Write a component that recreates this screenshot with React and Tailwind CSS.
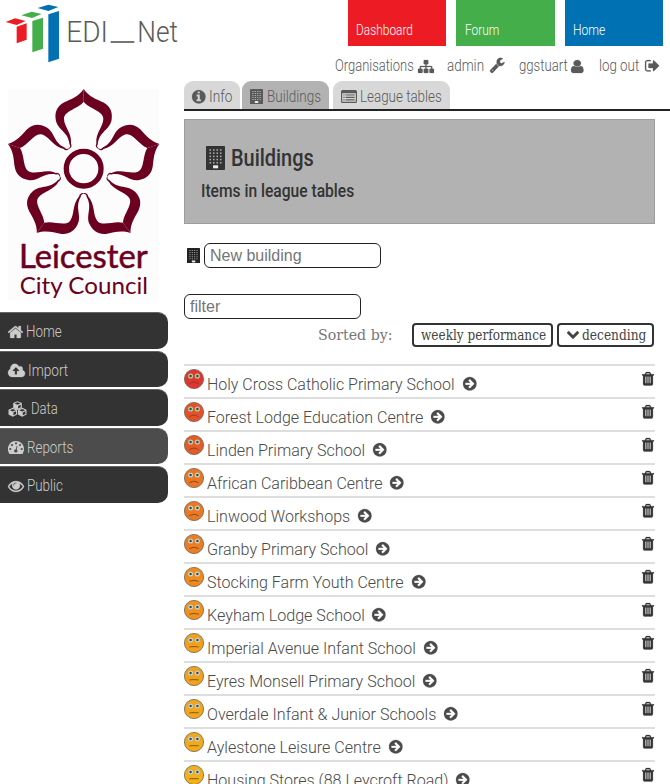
import { useLayoutEffect, useRef } from "react";

/* One line of text condensed or expanded to a fixed width. */
function Fit({ w, className = "", children }) {
  const ref = useRef(null);
  useLayoutEffect(() => {
    const el = ref.current;
    el.style.transform = `scaleX(${w / el.offsetWidth})`;
  }, [w]);
  return (
    <span className={`inline-block shrink-0 whitespace-nowrap ${className}`} style={{ width: w }}>
      <span ref={ref} className="inline-block origin-left">{children}</span>
    </span>
  );
}

const PATHS = {
  home: "M1472 992v480q0 26-19 45t-45 19h-384v-384h-256v384h-384q-26 0-45-19t-19-45v-480q0-1 .5-3t.5-3l575-474 575 474q1 2 1 6zm223-69l-62 74q-8 9-21 11h-3q-13 0-21-7l-692-577-692 577q-12 8-24 7-13-2-21-11l-62-74q-8-10-7-23.5t11-21.5l719-599q32-26 76-26t76 26l244 204v-195q0-14 9-23t23-9h192q14 0 23 9t9 23v408l219 182q10 8 11 21.5t-7 23.5z",
  cloud: "M1216 864q0-14-9-23l-352-352q-9-9-23-9t-23 9l-351 351q-10 12-10 24 0 14 9 23t23 9h224v352q0 13 9.5 22.5t22.5 9.5h192q13 0 22.5-9.5t9.5-22.5v-352h224q13 0 22.5-9.5t9.5-22.5zm640 288q0 159-112.5 271.5t-271.5 112.5h-1088q-185 0-316.5-131.5t-131.5-316.5q0-130 70-240t188-165q-2-30-2-43 0-212 150-362t362-150q156 0 285.5 87t188.5 231q71-62 166-62 106 0 181 75t75 181q0 76-41 138 130 31 213.5 135.5t83.5 238.5z",
  eye: "M1664 960q-152-236-381-353 61 104 61 225 0 185-131.5 316.5t-316.5 131.5-316.5-131.5-131.5-316.5q0-121 61-225-229 117-381 353 133 205 333.5 326.5t434.5 121.5 434.5-121.5 333.5-326.5zm-720-384q0-20-14-34t-34-14q-125 0-214.5 89.5t-89.5 214.5q0 20 14 34t34 14 34-14 14-34q0-86 61-147t147-61q20 0 34-14t14-34zm848 384q0 34-20 69-140 230-376.5 368.5t-499.5 138.5-499.5-139-376.5-368q-20-35-20-69t20-69q140-229 376.5-368t499.5-139 499.5 139 376.5 368q20 35 20 69z",
  arrow: "M1413 896q0-27-18-45l-91-91-362-362q-18-18-45-18t-45 18l-91 91q-18 18-18 45t18 45l189 189h-502q-26 0-45 19t-19 45v128q0 26 19 45t45 19h502l-189 189q-18 18-18 45t18 45l91 91q18 18 45 18t45-18l362-362 91-91q18-18 18-45zm251 0q0 209-103 385.5t-279.5 279.5-385.5 103-385.5-103-279.5-279.5-103-385.5 103-385.5 279.5-279.5 385.5-103 385.5 103 279.5 279.5 103 385.5z",
  info: "M1152 1376v-160q0-14-9-23t-23-9h-96v-512q0-14-9-23t-23-9h-320q-14 0-23 9t-9 23v160q0 14 9 23t23 9h96v320h-96q-14 0-23 9t-9 23v160q0 14 9 23t23 9h448q14 0 23-9t9-23zm-128-896v-160q0-14-9-23t-23-9h-192q-14 0-23 9t-9 23v160q0 14 9 23t23 9h192q14 0 23-9t9-23zm640 416q0 209-103 385.5t-279.5 279.5-385.5 103-385.5-103-279.5-279.5-103-385.5 103-385.5 279.5-279.5 385.5-103 385.5 103 279.5 279.5 103 385.5z",
  sitemap: "M1792 1248v320q0 40-28 68t-68 28h-320q-40 0-68-28t-28-68v-320q0-40 28-68t68-28h96v-192h-512v192h96q40 0 68 28t28 68v320q0 40-28 68t-68 28h-320q-40 0-68-28t-28-68v-320q0-40 28-68t68-28h96v-192h-512v192h96q40 0 68 28t28 68v320q0 40-28 68t-68 28h-320q-40 0-68-28t-28-68v-320q0-40 28-68t68-28h96v-192q0-52 38-90t90-38h512v-192h-96q-40 0-68-28t-28-68v-320q0-40 28-68t68-28h320q40 0 68 28t28 68v320q0 40-28 68t-68 28h-96v192h512q52 0 90 38t38 90v192h96q40 0 68 28t28 68z",
  wrench: "M448 1472q0-26-19-45t-45-19-45 19-19 45 19 45 45 19 45-19 19-45zm644-420l-682 682q-37 37-90 37-52 0-91-37l-106-108q-38-36-38-90 0-53 38-91l681-681q39 98 114.5 173.5t173.5 114.5zm634-435q0 39-23 106-47 134-164.5 217.5t-258.5 83.5q-185 0-316.5-131.5t-131.5-316.5 131.5-316.5 316.5-131.5q58 0 121.5 16.5t107.5 46.5q16 11 16 28t-16 28l-293 169v224l193 107q5-3 79-48.5t135.5-81 70.5-35.5q15 0 23.5 10t8.5 25z",
  user: "M1536 1399q0 109-62.5 187t-150.5 78h-854q-88 0-150.5-78t-62.5-187q0-85 8.5-160.5t31.5-152 58.5-131 94-89 134.5-34.5q131 128 313 128t313-128q76 0 134.5 34.5t94 89 58.5 131 31.5 152 8.5 160.5zm-256-887q0 159-112.5 271.5t-271.5 112.5-271.5-112.5-112.5-271.5 112.5-271.5 271.5-112.5 271.5 112.5 112.5 271.5z",
  signout: "M704 1440q0 4 1 20t.5 26.5-3 23.5-10 19.5-20.5 6.5h-320q-119 0-203.5-84.5t-84.5-203.5v-704q0-119 84.5-203.5t203.5-84.5h320q13 0 22.5 9.5t9.5 22.5q0 4 1 20t.5 26.5-3 23.5-10 19.5-20.5 6.5h-320q-66 0-113 47t-47 113v704q0 66 47 113t113 47h312l11.5 1 11.5 3 8 5.5 7 9 2 13.5zm928-544q0 26-19 45l-544 544q-19 19-45 19t-45-19-19-45v-288h-448q-26 0-45-19t-19-45v-384q0-26 19-45t45-19h448v-288q0-26 19-45t45-19 45 19l544 544q19 19 19 45z",
  chevron: "M1683 808l-742 741q-19 19-45 19t-45-19l-742-741q-19-19-19-45.5t19-45.5l166-165q19-19 45-19t45 19l531 531 531-531q19-19 45-19t45 19l166 165q19 19 19 45.5t-19 45.5z",
  trash: "M704 1376v-704q0-14-9-23t-23-9h-64q-14 0-23 9t-9 23v704q0 14 9 23t23 9h64q14 0 23-9t9-23zm256 0v-704q0-14-9-23t-23-9h-64q-14 0-23 9t-9 23v704q0 14 9 23t23 9h64q14 0 23-9t9-23zm256 0v-704q0-14-9-23t-23-9h-64q-14 0-23 9t-9 23v704q0 14 9 23t23 9h64q14 0 23-9t9-23zm-544-992h448l-48-117q-7-9-17-11h-317q-10 2-17 11zm928 32v64q0 14-9 23t-23 9h-96v948q0 83-47 143.5t-113 60.5h-832q-66 0-113-58.5t-47-141.5v-952h-96q-14 0-23-9t-9-23v-64q0-14 9-23t23-9h309l70-167q15-37 54-63t79-26h320q40 0 79 26t54 63l70 167h309q14 0 23 9t9 23z",
};

const BOXES = {
  home: "89 253 1613 1283",
  cloud: "-64 256 1920 1280",
  eye: "0 384 1792 1152",
  arrow: "128 128 1536 1536",
  info: "128 128 1536 1536",
  sitemap: "0 128 1792 1536",
  wrench: "85 256 1641 1515",
  user: "256 128 1280 1536",
  signout: "64 256 1568 1280",
  chevron: "90 533 1612 1035",
  trash: "192 128 1408 1536",
};

function Icon({ name, className }) {
  return (
    <svg viewBox={BOXES[name]} fill="currentColor" stroke="currentColor" strokeWidth="25" preserveAspectRatio="none" className={`block shrink-0 overflow-visible ${className}`}>
      <path d={PATHS[name]} />
    </svg>
  );
}

function Building({ className }) {
  const dots = [];
  for (let r = 0; r < 5; r++) for (let c = 0; c < 4; c++) dots.push([3.3 + c * 3.3, 3.2 + r * 3.2]);
  return (
    <svg viewBox="0 0 18 24" preserveAspectRatio="none" className={`block shrink-0 ${className}`}>
      <rect width="18" height="24" rx="0.8" fill="currentColor" />
      <g className="fill-white/60">
        {dots.map(([x, y]) => (
          <rect key={`${x}-${y}`} x={x} y={y} width="1.5" height="1.5" />
        ))}
      </g>
      <rect x="6.7" y="19.3" width="4.8" height="3" className="fill-white/90" />
    </svg>
  );
}

function ListAlt({ className }) {
  return (
    <svg viewBox="0 0 16 13" className={`block shrink-0 ${className}`}>
      <path fill="currentColor" fillRule="evenodd" d="M1.5 0h13A1.5 1.5 0 0 1 16 1.5v10a1.5 1.5 0 0 1-1.5 1.5h-13A1.5 1.5 0 0 1 0 11.5v-10A1.5 1.5 0 0 1 1.5 0zM1.2 3.2v8.2q0 .4.4.4h12.8q.4 0 .4-.4V3.2z" />
      <path stroke="currentColor" strokeWidth="1.2" d="M2.4 5h1.2M4.6 5h9M2.4 7.4h1.2M4.6 7.4h9M2.4 9.8h1.2M4.6 9.8h9" />
    </svg>
  );
}

function Cubes({ className }) {
  const cube = (x, y) => (
    <g key={`${x}${y}`} transform={`translate(${x} ${y})`}>
      <path fill="currentColor" d="M0-4.4 4.3-2.5V2.3L0 4.5-4.3 2.3v-4.8z" />
      <path fill="#333" d="M0-3.3 2.9-2 0-.8-2.9-2zM.6 .3 3.2-.9V1.7L.6 3z" />
    </g>
  );
  return (
    <svg viewBox="0 0 19 16" className={`block shrink-0 ${className}`}>
      {cube(9.5, 4.6)}
      {cube(4.8, 11.2)}
      {cube(14.2, 11.2)}
    </svg>
  );
}

function Gauge({ className }) {
  return (
    <svg viewBox="0 0 16 13" className={`block shrink-0 ${className}`}>
      <path fill="currentColor" d="M8 0a8 8 0 0 1 8 8q0 2.4-1.2 4.4-.3.5-.8.5H2q-.5 0-.8-.5A8 8 0 0 1 8 0z" />
      <g fill="#4c4c4c">
        <circle cx="2.3" cy="8" r="1.1" />
        <circle cx="4" cy="4" r="1.1" />
        <circle cx="8" cy="2.3" r="1.1" />
        <circle cx="12" cy="4" r="1.1" />
        <circle cx="13.7" cy="8" r="1.1" />
        <circle cx="7.8" cy="9.9" r="1.7" />
      </g>
      <path d="M8 9.6 9 5.4" stroke="#4c4c4c" strokeWidth="0.9" strokeLinecap="round" />
    </svg>
  );
}

function Face({ color, frown, eye }) {
  return (
    <svg viewBox="0 0 20 20" className="block size-5 shrink-0">
      <circle cx="10" cy="10" r="9.6" fill={color} stroke="#6b6357" strokeWidth="0.8" />
      {[6.6, 13.4].map((x) => (
        <g key={x}>
          <circle cx={x} cy="7" r="2.6" fill={eye} stroke="#9a8a5c" strokeWidth="0.3" />
          <circle cx={x} cy="7" r="1.2" fill="#1d4b5e" />
        </g>
      ))}
      <path d={`M5.3 ${13.7 + frown / 3}Q10 ${13.7 - frown * 0.7} 14.7 ${13.7 + frown / 3}`} fill="none" stroke="#5d4a20" strokeWidth="0.8" />
    </svg>
  );
}

function EdiLogo() {
  return (
    <svg viewBox="0 0 600 240" className="block h-20 w-[200px] shrink-0">
      <path fill="#ed1c24" d="M17 66 45 55l32 8-27 12zM50 80l30-10v49l-30 11z" />
      <path fill="#43ae4a" d="M64 46l31-11 30 7-29 12zM97 63l32-10v93l-32 11z" />
      <path fill="#0071b2" d="M113 24l32-10 30 7-30 12zM145 43l32-10v143l-32 11z" />
      <g fill="#5a5a5a" fontFamily="Roboto, sans-serif" fontWeight="300" fontSize="91">
        <text x="199" y="127" textLength="125" lengthAdjust="spacingAndGlyphs">EDI</text>
        <text x="412" y="127" textLength="122" lengthAdjust="spacingAndGlyphs">Net</text>
      </g>
      <path d="M332 126h71" stroke="#5a5a5a" strokeWidth="5" />
    </svg>
  );
}

function CouncilLogo() {
  const half = "M0-239C-16-215-40-208-58-199C-80-187-87-170-84-148C-80-116-46-112-42.5-73A8 8 0 0 1-44.3-61.5L-43-60A10 10 0 0 0-38-75C-35-108-59-126-59-150C-59-174-16-180 0-201z";
  return (
    <svg viewBox="0 0 510 690" className="block h-[230px] w-[170px] shrink-0">
      <rect x="24" y="27" width="453" height="634" fill="#fcfcfc" />
      <g transform="translate(251 266)" fill="#6b0020">
        {[0, 72, 144, 216, 288].map((a) => (
          <g key={a} transform={`rotate(${a})`}>
            <path d={half} />
            <path d={half} transform="scale(-1 1)" />
          </g>
        ))}
        <circle r="52" fill="none" stroke="#6b0020" strokeWidth="16" />
      </g>
      <g fill="#6b0020" stroke="#6b0020" fontFamily="Lato, sans-serif">
        <text x="57" y="564" fontSize="96" fontWeight="400" strokeWidth="1.5" textLength="386" lengthAdjust="spacingAndGlyphs">Leicester</text>
        <text x="59" y="643" fontSize="69" fontWeight="400" strokeWidth="0" textLength="385" lengthAdjust="spacingAndGlyphs">City Council</text>
      </g>
    </svg>
  );
}

const TILES = [
  ["Dashboard", 57, "bg-[#ed1c24]"],
  ["Forum", 34, "bg-[#43ae4a]"],
  ["Home", 32, "bg-[#0071b2]"],
];

const SIDE = [
  ["Home", 36, <Icon name="home" className="h-3 w-[15px]" />, "gap-[3px] bg-[#333]"],
  ["Import", 40, <Icon name="cloud" className="h-3 w-[17px]" />, "gap-[3px] bg-[#333]"],
  ["Data", 27, <Cubes className="h-4 w-[19px]" />, "gap-1 bg-[#333]"],
  ["Reports", 46, <Gauge className="h-[13px] w-4" />, "gap-[3px] bg-[#4c4c4c]"],
  ["Public", 36, <Icon name="eye" className="h-[11px] w-4" />, "gap-[3px] bg-[#333]"],
];

const ROWS = [
  ["Holy Cross Catholic Primary School", 247, "#e3342f", 4.2, "#c5cf94"],
  ["Forest Lodge Education Centre", 215, "#e5502a", 3.9, "#c9d0a0"],
  ["Linden Primary School", 157, "#e65a29", 3.6, "#d3d2a8"],
  ["African Caribbean Centre", 174.5, "#ec7424", 2.8, "#dedcba"],
  ["Linwood Workshops", 142.5, "#ec7824", 2.6, "#dedcba"],
  ["Granby Primary School", 160, "#ed7c22", 2.4, "#dedcc0"],
  ["Stocking Farm Youth Centre", 196, "#ef8a1f", 1.8, "#e0dec8"],
  ["Keyham Lodge School", 156.5, "#f0901d", 1.5, "#dcdcd0"],
  ["Imperial Avenue Infant School", 208, "#f2a01a", 0.8, "#dcdcd0"],
  ["Eyres Monsell Primary School", 207.5, "#f2a21a", 0.6, "#dcdcd0"],
  ["Overdale Infant & Junior Schools", 228, "#f3a619", 0.4, "#dcdcd4"],
  ["Aylestone Leisure Centre", 173, "#f3aa18", 0.3, "#d8dcd8"],
  ["Housing Stores (88 Leycroft Road)", 240.5, "#f4b016", 0.2, "#d8dcd8"],
];

export default function App() {
  return (
    <div className="flex h-[784px] w-[670px] overflow-hidden bg-white font-[Roboto,sans-serif] font-light text-[#5a5a5a]">
      <aside className="flex w-[184px] shrink-0 flex-col">
        <EdiLogo />
        <CouncilLogo />
        <nav className="mt-[2px] flex w-[168px] flex-col gap-[2px]">
          {SIDE.map(([label, w, icon, cls]) => (
            <a key={label} className={`flex h-[36.5px] items-center rounded-r-[10px] border-t border-[#666] pt-[2.5px] pl-2 text-base leading-6 text-[#ccc] ${cls}`}>
              {icon}
              <Fit w={w}>{label}</Fit>
            </a>
          ))}
        </nav>
      </aside>

      <main className="flex w-[486px] shrink-0 flex-col">
        <header className="flex h-[81px] shrink-0 flex-col items-end">
          <div className="flex gap-[10px] pr-[7px]">
            {TILES.map(([label, w, bg]) => (
              <a key={label} className={`flex h-[46px] w-[98.5px] items-end pb-[5px] pl-[8.5px] text-sm leading-[22px] text-white ${bg}`}>
                <Fit w={w}>{label}</Fit>
              </a>
            ))}
          </div>
          <div className="flex h-10 w-[335px] shrink-0 items-center text-[16px] leading-5">
            <Fit w={78.5}>Organisations</Fit>
            <Icon name="sitemap" className="ml-1 h-[13px] w-4" />
            <Fit w={37} className="ml-[13.5px]">admin</Fit>
            <Icon name="wrench" className="ml-1.5 h-[14px] w-[14.5px]" />
            <Fit w={48.5} className="ml-[14px]">ggstuart</Fit>
            <Icon name="user" className="ml-[4px] h-[13px] w-[12.5px]" />
            <Fit w={40} className="ml-[15.5px]">log out</Fit>
            <Icon name="signout" className="ml-[5.5px] h-[11.5px] w-[14px]" />
          </div>
        </header>

        <div className="flex h-[30px] shrink-0 border-b-2 border-[#222] text-base leading-6">
          <a className="flex w-[55.5px] items-center rounded-t-[9px] bg-[#d8d8d8] pt-[3px] pl-2">
            <Icon name="info" className="size-[13.5px]" />
            <Fit w={23} className="ml-[3px]">Info</Fit>
          </a>
          <a className="ml-[2.5px] flex w-[87px] items-center rounded-t-[9px] bg-[#b2b2b2] pt-[3px] pl-2">
            <Building className="h-[15px] w-[13px]" />
            <Fit w={54} className="ml-1">Buildings</Fit>
          </a>
          <a className="ml-1 flex w-[117px] items-center rounded-t-[9px] bg-[#d8d8d8] pt-[3px] pl-2">
            <ListAlt className="h-[13px] w-4" />
            <Fit w={82} className="ml-[3px]">League tables</Fit>
          </a>
        </div>

        <section className="mt-2 h-[104.5px] w-[471px] shrink-0 border border-[#9d9d9d] bg-[#b2b2b2] pt-[22px] pl-4 text-[#333]">
          <h1 className="flex h-8 items-center pl-[5px] text-[24px] leading-8 font-medium">
            <Building className="h-6 w-[19px]" />
            <Fit w={83} className="ml-1.5">Buildings</Fit>
          </h1>
          <h2 className="mt-[3px] flex h-7 items-center text-[19px] leading-7 font-medium">
            <Fit w={153.5}>Items in league tables</Fit>
          </h2>
        </section>

        <div className="mt-[19.5px] flex h-[25px] shrink-0 items-center pl-[3px] font-['Liberation_Sans',sans-serif] font-normal">
          <Building className="h-[15.5px] w-[13px] text-[#222]" />
          <div className="ml-1 flex h-[25px] w-[176.5px] items-center rounded-md border-[1.5px] border-[#222] pl-[5px] text-base leading-5 text-[#757575]">
            <Fit w={92}>New building</Fit>
          </div>
        </div>
        <div className="mt-[26px] flex h-[25px] w-[176.5px] shrink-0 items-center rounded-md border-[1.5px] border-[#222] pl-[5px] font-['Liberation_Sans',sans-serif] text-base leading-5 font-normal text-[#757575]">
          <Fit w={30}>filter</Fit>
        </div>

        <div className="mt-1 flex h-6 w-[470px] shrink-0 items-center justify-end font-['DejaVu_Serif',serif] font-normal">
          <Fit w={75} className="mr-[19px] text-[15.5px] leading-6 text-[#777]">Sorted by:</Fit>
          <button className="flex h-6 w-[141px] items-center rounded border-2 border-[#333] pl-[7px] text-[14.5px] leading-5 text-[#444]">
            <Fit w={125}>weekly performance</Fit>
          </button>
          <button className="ml-1 flex h-6 w-[97px] items-center rounded border-2 border-[#333] pl-2 text-[14.5px] leading-5 text-[#444]">
            <Icon name="chevron" className="h-2 w-3" />
            <Fit w={64} className="ml-[2.5px]">decending</Fit>
          </button>
        </div>

        <ul className="mt-[17px] w-[471px] shrink-0">
          {ROWS.map(([name, w, color, frown, eye]) => (
            <li key={name} className="flex h-[33px] items-start border-t-2 border-[#dedede] text-[#4a4a4a]">
              <div className="pt-[3px]">
                <Face color={color} frown={frown} eye={eye} />
              </div>
              <Fit w={w + 1} className="ml-[3px] pt-1.5 text-[17px] leading-6">{name}</Fit>
              <Icon name="arrow" className="mt-[11px] ml-[7.5px] size-[13.5px]" />
              <Icon name="trash" className="mt-[6px] mr-px ml-auto h-[13.5px] w-3 text-[#333]" />
            </li>
          ))}
        </ul>
      </main>
    </div>
  );
}
